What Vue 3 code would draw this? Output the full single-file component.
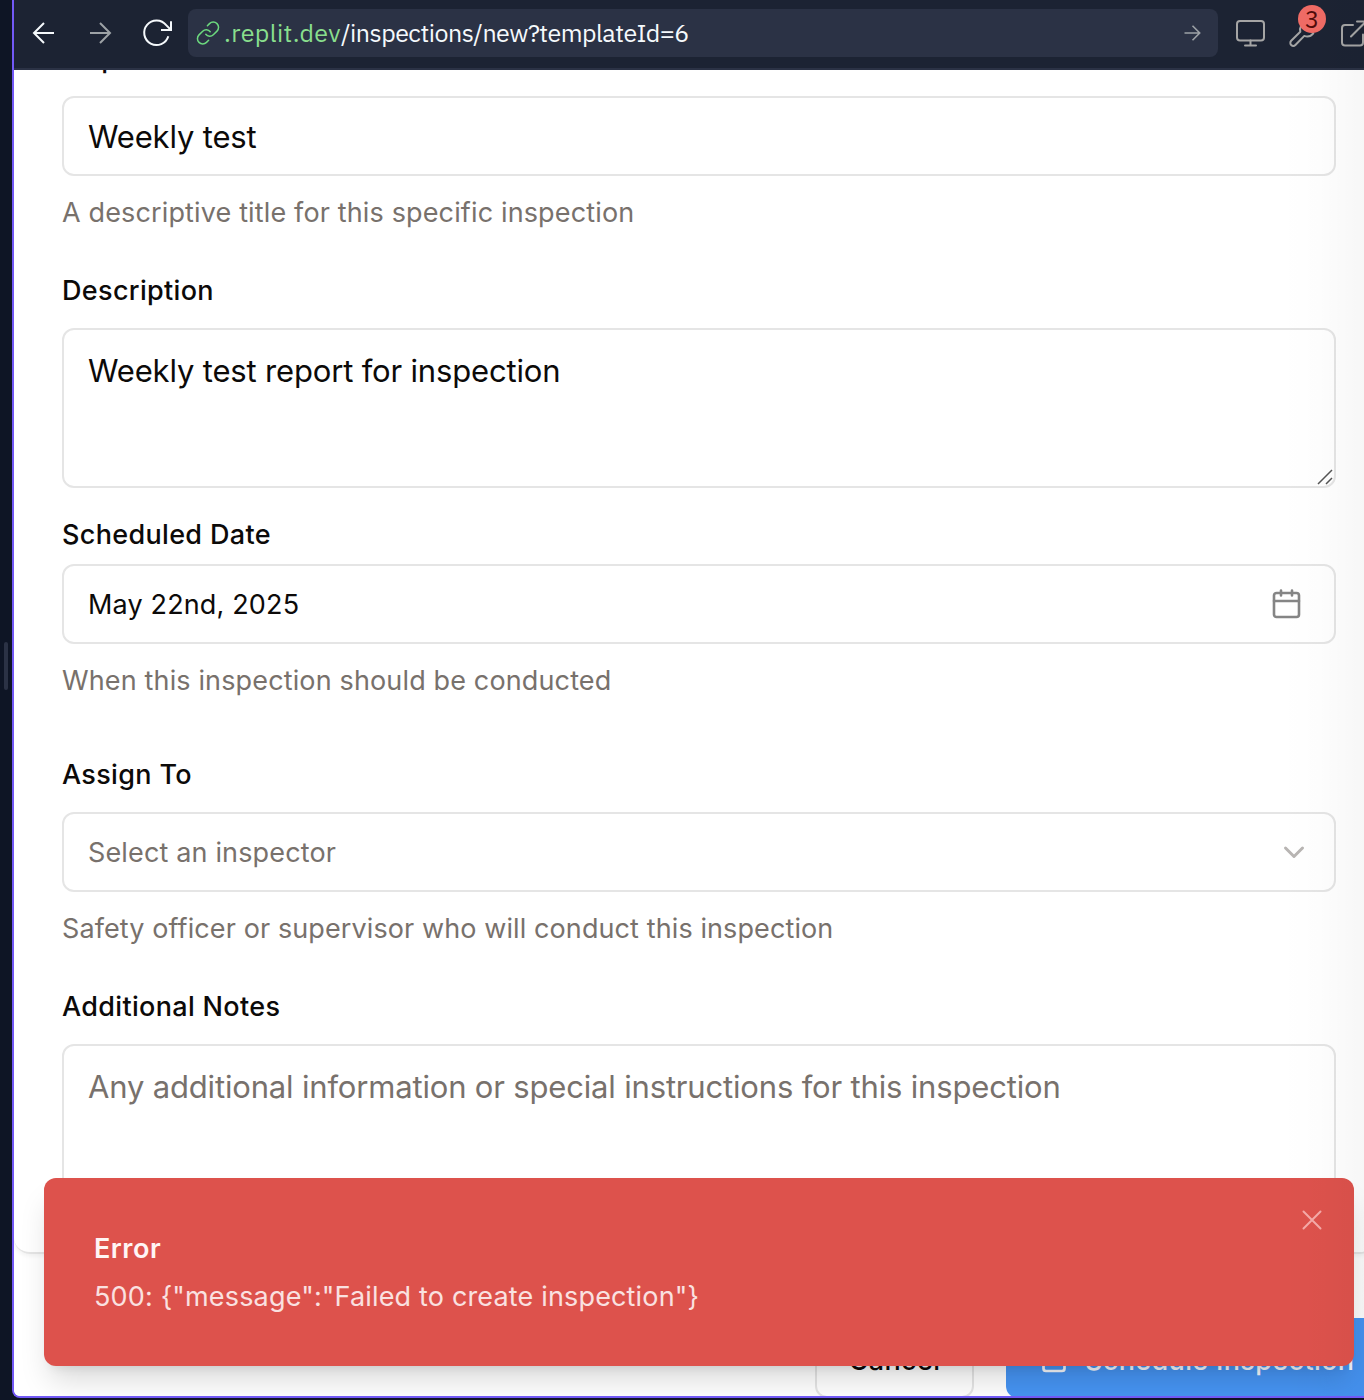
<script setup>
const fields = [
  { id: 'title', label: 'Inspection Title', kind: 'input', value: 'Weekly test', help: 'A descriptive title for this specific inspection' },
  { id: 'description', label: 'Description', kind: 'area', value: 'Weekly test report for inspection' },
  { id: 'scheduled', label: 'Scheduled Date', kind: 'date', value: 'May 22nd, 2025', help: 'When this inspection should be conducted' },
  { id: 'assign', label: 'Assign To', kind: 'select', value: 'Select an inspector', help: 'Safety officer or supervisor who will conduct this inspection' },
  { id: 'notes', label: 'Additional Notes', kind: 'area', value: 'Any additional information or special instructions for this inspection', empty: true }
]
</script>

<template>
  <div class="screen">
    <div class="gutter"><div class="handle"></div></div>
    <div class="pane">
      <header class="bar">
        <svg class="nav back" width="24" height="24" viewBox="0 0 24 24"><path d="M22 12H2.5M12 2L2 12l10 10" /></svg>
        <svg class="nav fwd" width="24" height="24" viewBox="0 0 24 24"><path d="M2 12h19.5M12 2l10 10-10 10" /></svg>
        <svg class="nav reload" width="32" height="32" viewBox="0 0 32 32"><path d="M27.300 19.200A12.300 12.300 0 1 1 25.200 8.200L29.800 12.800M20 13H30V4.300" /></svg>
        <div class="address">
          <svg class="link" width="24" height="24" viewBox="0 0 24 24"><path d="M9.8 13.300a5 5 0 0 0 7.500.5l3.700-3.700a5.300 5.300 0 0 0-7.500-7.500l-2.100 2.100M14.200 10.700a5 5 0 0 0-7.500-.5L3 13.900a5.300 5.300 0 0 0 7.500 7.500l2.100-2.100" /></svg>
          <span class="url"><span class="host">.replit.dev</span>/inspections/new?templateId=6</span>
          <svg class="go" width="18" height="18" viewBox="0 0 18 18"><path d="M1.500 9h15M9.500 1.800L16.700 9l-7.200 7.200" /></svg>
        </div>
        <svg class="tool monitor" width="32" height="32" viewBox="0 0 32 32"><rect x="3" y="4" width="27" height="19.500" rx="3" /><path d="M16.500 23.500v5M11 28.500h11" /></svg>
        <div class="devtools">
          <svg class="tool" width="32" height="32" viewBox="0 0 32 32"><path d="M14 9a8 8 0 0 0-.7 5.800L4.200 23.800a2.900 2.900 0 0 0 4.200 4.200L17.300 18.900a8 8 0 0 0 9-2.600" /></svg>
          <span class="badge">3</span>
        </div>
        <svg class="tool external" width="32" height="32" viewBox="0 0 32 32"><path d="M16 8H8a3 3 0 0 0-3 3v14.500a3 3 0 0 0 3 3h15a3 3 0 0 0 3-3v-8M20 4.500h9.500v9.500M14 19.500L29 4.500" /></svg>
      </header>

      <main class="view">
        <section class="card">
          <div v-for="f in fields" :key="f.id" class="field" :class="f.id">
            <div class="label">{{ f.label }}</div>
            <div class="control" :class="[f.kind, { empty: f.empty }]">
              <span class="value">{{ f.value }}</span>
              <svg v-if="f.kind === 'date'" width="32" height="32" viewBox="0 0 32 32" class="calendar"><rect x="4" y="5" width="25" height="24" rx="2.500" /><path d="M4 13h25M11 2.500v5M22 2.500v5" /></svg>
              <svg v-if="f.kind === 'select'" width="24" height="24" viewBox="0 0 24 24" class="chevron"><path d="M3.500 8l8.500 8.500L20.500 8" /></svg>
              <svg v-if="f.id === 'description'" width="16" height="16" viewBox="0 0 16 16" class="grip"><path d="M1 15L15 1M9 15l6-6" /></svg>
            </div>
            <div v-if="f.help" class="help">{{ f.help }}</div>
          </div>
        </section>
        <footer class="actions">
          <div class="button cancel">Cancel</div>
          <div class="button submit">
            <svg width="32" height="32" viewBox="0 0 32 32"><rect x="5.500" y="5" width="21" height="22" rx="2.500" /><path d="M6 13h20M11 2v6M21 2v6" /></svg>
            <span>Schedule Inspection</span>
          </div>
        </footer>
      </main>

      <div class="toast">
        <div class="toast-title">Error</div>
        <div class="toast-text">500: {"message":"Failed to create inspection"}</div>
        <svg class="close" width="20" height="20" viewBox="0 0 20 20"><path d="M1.500 1.500l17 17M18.500 1.500l-17 17" /></svg>
      </div>
    </div>
    <div class="shade"></div>
  </div>
</template>

<style>
body { margin: 0; background: #0e1525; }
</style>

<style scoped>
* { box-sizing: border-box; }
svg { display: block; flex: none; fill: none; stroke: currentColor; stroke-width: 2; stroke-linecap: round; stroke-linejoin: round; }
.screen { position: relative; display: flex; width: 1364px; height: 1400px; overflow: hidden; background: #0e1525; font-family: Inter, sans-serif; color: #0c0a09; }
.gutter { display: flex; align-items: center; width: 12px; flex: none; padding-left: 4px; height: 1332px; }
.handle { width: 4px; height: 48px; border-radius: 2px; background: #2b3245; }
.pane { position: relative; width: 1352px; height: 1398px; flex: none; border: solid #7259f5; border-width: 0 0 2px 2px; border-radius: 0 0 0 8px; overflow: hidden; background: #fff; }
.bar { display: flex; align-items: center; width: 1350px; height: 70px; padding-bottom: 2px; background: #1c2333; border-bottom: 2px solid #2b3245; color: #f5f9fc; }
.nav { stroke-linecap: butt; stroke-linejoin: miter; }
.back { margin-left: 18px; }
.fwd { margin-left: 32px; color: #9da2a6; }
.reload { margin-left: 28.500px; }
.address { display: flex; align-items: center; width: 1030px; height: 48px; margin-left: 15.500px; padding: 0 17px 0 8px; border-radius: 8px; background: #2b3245; flex: none; }
.link { color: #6cd97e; stroke-width: 1.5; }
.url { flex: 1; margin-left: 4px; font: 25px/36px "IBM Plex Sans", "Noto Sans", sans-serif; letter-spacing: -.5px; white-space: nowrap; }
.host { color: #89df8d; letter-spacing: .4px; }
.go { color: #9da2a6; stroke-width: 1.6; stroke-linecap: butt; stroke-linejoin: miter; }
.tool { color: #a5a5a5; stroke-width: 2; }
.monitor { margin-left: 15.500px; }
.devtools { position: relative; margin-left: 21.500px; }
.badge { position: absolute; left: 11px; top: -12px; width: 28px; height: 28px; border-radius: 50%; background: #f06b65; color: #520b0b; font: 24px/28px "IBM Plex Sans", "Noto Sans", sans-serif; text-align: center; }
.external { margin-left: 18px; }
.view { width: 1350px; height: 1326px; overflow: hidden; background: #fff; }
.card { height: 1212px; margin-top: -28px; padding: 0 40px 0 48px; width: 1362px; border: 2px solid #e5e5e5; border-left: 0; border-radius: 0 0 16px 16px; box-shadow: 0 2px 4px rgba(0,0,0,.05); }
.field { width: 1274px; margin-bottom: 44px; }
.description { margin-bottom: 32px; }
.scheduled { margin-bottom: 60px; }
.label { height: 28px; margin-bottom: 24px; font-size: 27px; font-weight: 500; line-height: 30px; letter-spacing: .33px; }
.scheduled .label { margin-bottom: 16px; }
.control { position: relative; display: flex; align-items: center; justify-content: space-between; height: 80px; padding: 0 24px; border: 2px solid #e5e5e5; border-radius: 12px; font-size: 31px; letter-spacing: -.17px; white-space: nowrap; }
.area { height: 160px; align-items: flex-start; padding-top: 17px; line-height: 48px; }
.date, .select { font-size: 27px; letter-spacing: .15px; }
.select, .empty, .help { color: #78716c; }
.calendar { color: #858585; stroke-width: 2.6; margin-right: 8.500px; }
.chevron { color: #b8b5b3; stroke-width: 3; margin-right: 4px; }
.grip { position: absolute; right: 1px; bottom: 1px; color: #555; stroke-width: 1.5; stroke-linecap: butt; }
.help { margin-top: 16px; height: 40px; font-size: 27px; line-height: 42px; letter-spacing: .14px; white-space: nowrap; }
.assign .help { letter-spacing: .1px; }
.actions { display: flex; gap: 32px; margin: 64px 0 0 801px; width: 700px; }
.button { display: flex; align-items: center; height: 80px; border-radius: 12px; font-size: 27px; font-weight: 500; letter-spacing: .35px; white-space: nowrap; flex: none; padding-top: 4px; }
.cancel { width: 159px; justify-content: center; border: 2px solid #e5e5e5; }
.submit { width: 380px; padding-left: 32px; gap: 15px; background: #4694f3; color: #f8faff; }
.submit svg { stroke-width: 2.7; }
.toast { position: absolute; left: 30px; top: 1178px; width: 1310px; height: 188px; padding: 51px 50px 49px; border-radius: 12px; background: #dd524c; color: #fff5f5; box-shadow: 0 20px 30px -6px rgba(0,0,0,.15), 0 8px 12px -8px rgba(0,0,0,.12); }
.toast-title { font-size: 27px; line-height: 40px; font-weight: 600; letter-spacing: .5px; }
.toast-text { margin-top: 8px; font-size: 27px; line-height: 40px; letter-spacing: .16px; opacity: .88; white-space: nowrap; }
.close { position: absolute; top: 32px; right: 32px; color: #f5aaa8; }
.shade { position: absolute; right: 0; top: 0; width: 84px; height: 1396px; background: linear-gradient(to right, transparent, rgba(0,0,0,.007) 45%, rgba(0,0,0,.033)); pointer-events: none; }
</style>
